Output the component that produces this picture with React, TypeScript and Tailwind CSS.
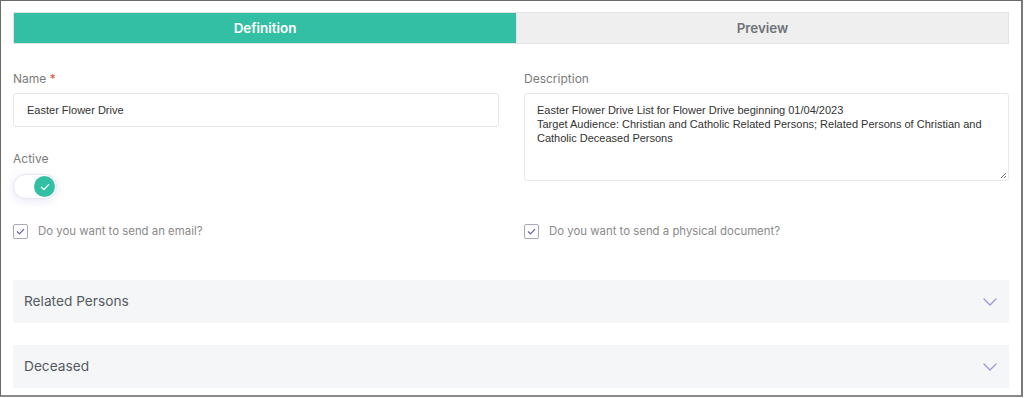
import React from "react";

const poppins = { fontFamily: "Inter, 'Noto Sans', sans-serif" };
const arial = { fontFamily: "'Liberation Sans', Arial, sans-serif" };

function Chevron() {
  return (
    <svg width="14" height="8" viewBox="0 0 14 8" fill="none">
      <path d="M1 1l6 6 6-6" stroke="#9a98dc" strokeWidth="1.3" strokeLinecap="round" strokeLinejoin="round" />
    </svg>
  );
}

function Check({ color, w = 9 }: { color: string; w?: number }) {
  return (
    <svg width={w} height={w} viewBox="0 0 10 10" fill="none">
      <path d="M1.5 5.3l2.4 2.3L8.6 2.6" stroke={color} strokeWidth="1.3" strokeLinecap="round" strokeLinejoin="round" />
    </svg>
  );
}

function CheckRow({ label }: { label: string }) {
  return (
    <div className="flex items-center gap-[10px] h-[15px]">
      <div className="w-[15px] h-[15px] shrink-0 rounded-[2px] border border-[#a9a9bd] flex items-center justify-center bg-white">
        <Check color="#5e5ca8" />
      </div>
      <span className="text-[11.4px] leading-[15px] text-[#8a8a8a]" style={poppins}>{label}</span>
    </div>
  );
}

function Accordion({ title }: { title: string }) {
  return (
    <div className="h-[43px] bg-[#f5f6f8] flex items-center justify-between pl-[11px] pr-[12px]">
      <span className="text-[13.7px] text-[#555b61]" style={poppins}>{title}</span>
      <Chevron />
    </div>
  );
}

export default function App() {
  return (
    <div className="w-[1023px] h-[397px] bg-white border-l border-t border-[#6a6a6a] border-r-2 border-b-2 border-r-[#7a7a7a] border-b-[#8a8a8a] pt-[11px] px-[12px]">
      {/* Tabs */}
      <div className="flex h-[32px]">
        <div className="w-[504px] bg-[#33bfa3] border border-[#e3e3e3] flex items-center justify-center">
          <span className="text-white text-[13.4px] leading-[18px] font-semibold" style={poppins}>Definition</span>
        </div>
        <div className="flex-1 bg-[#efefef] border border-[#e3e3e3] border-l-0 flex items-center justify-center">
          <span className="text-[#6f737a] text-[13.4px] leading-[18px] font-semibold" style={poppins}>Preview</span>
        </div>
      </div>

      {/* Form */}
      <div className="grid grid-cols-[486px_485px] gap-x-[25px] mt-[26px]">
        <div>
          <div className="text-[12px] text-[#7b7b7b] leading-[18px]" style={poppins}>
            Name <span className="text-[#e0503c]">*</span>
          </div>
          <div className="mt-[5px] h-[34px] border border-[#e8e8e8] rounded-[3px] flex items-center px-[13px]">
            <span className="text-[11px] text-[#333]" style={arial}>Easter Flower Drive</span>
          </div>
          <div className="mt-[23px] text-[12px] text-[#7b7b7b] leading-[18px]" style={poppins}>Active</div>
          <div className="mt-[6px] w-[44px] h-[25px] rounded-full border border-[#e6e6ee] bg-white shadow-[0_2px_8px_rgba(120,120,200,0.18)] relative">
            <div className="absolute right-[1px] top-[1px] w-[21px] h-[21px] rounded-full bg-[#33bfa3] flex items-center justify-center">
              <Check color="#ffffff" w={10} />
            </div>
          </div>
        </div>
        <div>
          <div className="text-[12px] text-[#7b7b7b] leading-[18px]" style={poppins}>Description</div>
          <div className="mt-[5px] h-[88px] border border-[#e8e8e8] rounded-[3px] px-[12px] pt-[9px] relative">
            <p className="text-[11px] leading-[14px] text-[#333]" style={arial}>
              Easter Flower Drive List for Flower Drive beginning 01/04/2023
              <br />
              Target Audience: Christian and Catholic Related Persons; Related Persons of Christian and Catholic Deceased Persons
            </p>
            <svg className="absolute right-[1px] bottom-[1px]" width="7" height="7" viewBox="0 0 7 7">
              <path d="M6 1L1 6M6 4L4 6" stroke="#777" strokeWidth="1" />
            </svg>
          </div>
        </div>
      </div>

      <div className="grid grid-cols-[486px_485px] gap-x-[25px] mt-[25px]">
        <CheckRow label="Do you want to send an email?" />
        <CheckRow label="Do you want to send a physical document?" />
      </div>

      <div className="mt-[41px] flex flex-col gap-[22px]">
        <Accordion title="Related Persons" />
        <Accordion title="Deceased" />
      </div>
    </div>
  );
}
